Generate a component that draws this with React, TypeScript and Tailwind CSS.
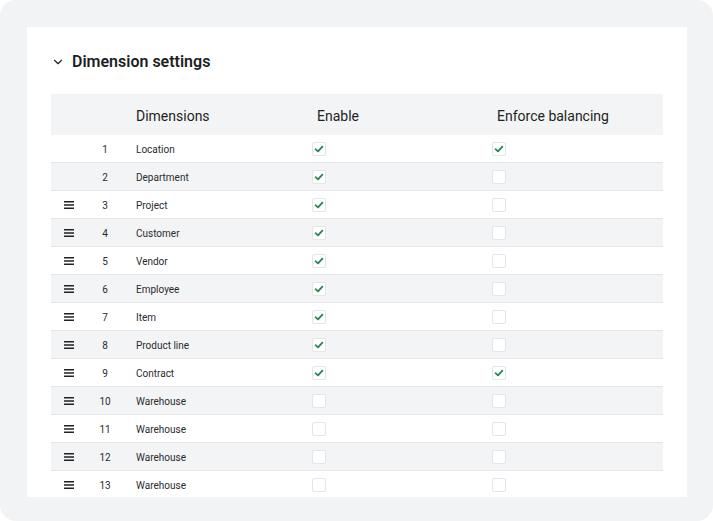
import { ChevronDown } from "lucide-react"

const rows = [
  { n: 1, name: "Location", enable: true, balance: true, handle: false },
  { n: 2, name: "Department", enable: true, balance: false, handle: false },
  { n: 3, name: "Project", enable: true, balance: false, handle: true },
  { n: 4, name: "Customer", enable: true, balance: false, handle: true },
  { n: 5, name: "Vendor", enable: true, balance: false, handle: true },
  { n: 6, name: "Employee", enable: true, balance: false, handle: true },
  { n: 7, name: "Item", enable: true, balance: false, handle: true },
  { n: 8, name: "Product line", enable: true, balance: false, handle: true },
  { n: 9, name: "Contract", enable: true, balance: true, handle: true },
  { n: 10, name: "Warehouse", enable: false, balance: false, handle: true },
  { n: 11, name: "Warehouse", enable: false, balance: false, handle: true },
  { n: 12, name: "Warehouse", enable: false, balance: false, handle: true },
  { n: 13, name: "Warehouse", enable: false, balance: false, handle: true },
]

function Checkbox({ checked }: { checked: boolean }) {
  return (
    <div className="w-[14px] h-[14px] rounded-[2px] border border-[#e3e5e8] bg-white flex items-center justify-center">
      {checked && (
        <svg width="10" height="10" viewBox="0 0 10 10" fill="none">
          <path d="M1.6 5.2 L4 7.4 L8.4 2.6" stroke="#2b8552" strokeWidth="1.8" strokeLinecap="round" strokeLinejoin="round" />
        </svg>
      )}
    </div>
  )
}

function Handle() {
  return (
    <svg width="10" height="8" viewBox="0 0 10 8" fill="none">
      <path d="M0 0.75h10M0 4h10M0 7.25h10" stroke="#222" strokeWidth="1.3" />
    </svg>
  )
}

export default function App() {
  return (
    <div className="w-[713px] h-[521px] bg-white font-['Roboto',sans-serif]">
      <div className="w-full h-full rounded-[16px] bg-[#f2f3f5] pt-[27px] pl-[27px] pr-[26px] pb-[24px]">
        <div className="h-full bg-white overflow-hidden px-[24px] pt-[23px]">
          <div className="flex items-center gap-[7px] h-[24px] mb-[20px]">
            <ChevronDown className="w-[14px] h-[14px] text-[#222]" strokeWidth={2} />
            <h2 className="text-[16px] font-semibold text-[#1e1f21]">Dimension settings</h2>
          </div>

          <div className="grid grid-cols-[36px_36px_189px_180px_1fr] h-[41px] bg-[#f3f4f6] items-center pt-[3px] text-[14px] text-[#1e1f21]">
            <div />
            <div />
            <div className="pl-[13px]">Dimensions</div>
            <div className="pl-[5px]">Enable</div>
            <div className="pl-[5px]">Enforce balancing</div>
          </div>

          {rows.map((row, i) => (
            <div
              key={row.n}
              className={`grid grid-cols-[36px_36px_189px_180px_1fr] h-[28px] items-center border-b border-[#e3e5e8] text-[10px] text-[#2a2b2d] ${
                i % 2 === 1 ? "bg-[#f3f4f6]" : "bg-white"
              }`}
            >
              <div className="flex justify-center pt-[1px]">{row.handle && <Handle />}</div>
              <div className="text-center pt-[2px]">{row.n}</div>
              <div className="pl-[13px] pt-[2px]">{row.name}</div>
              <div className="pt-[1px]">
                <Checkbox checked={row.enable} />
              </div>
              <div className="pt-[1px]">
                <Checkbox checked={row.balance} />
              </div>
            </div>
          ))}
        </div>
      </div>
    </div>
  )
}
